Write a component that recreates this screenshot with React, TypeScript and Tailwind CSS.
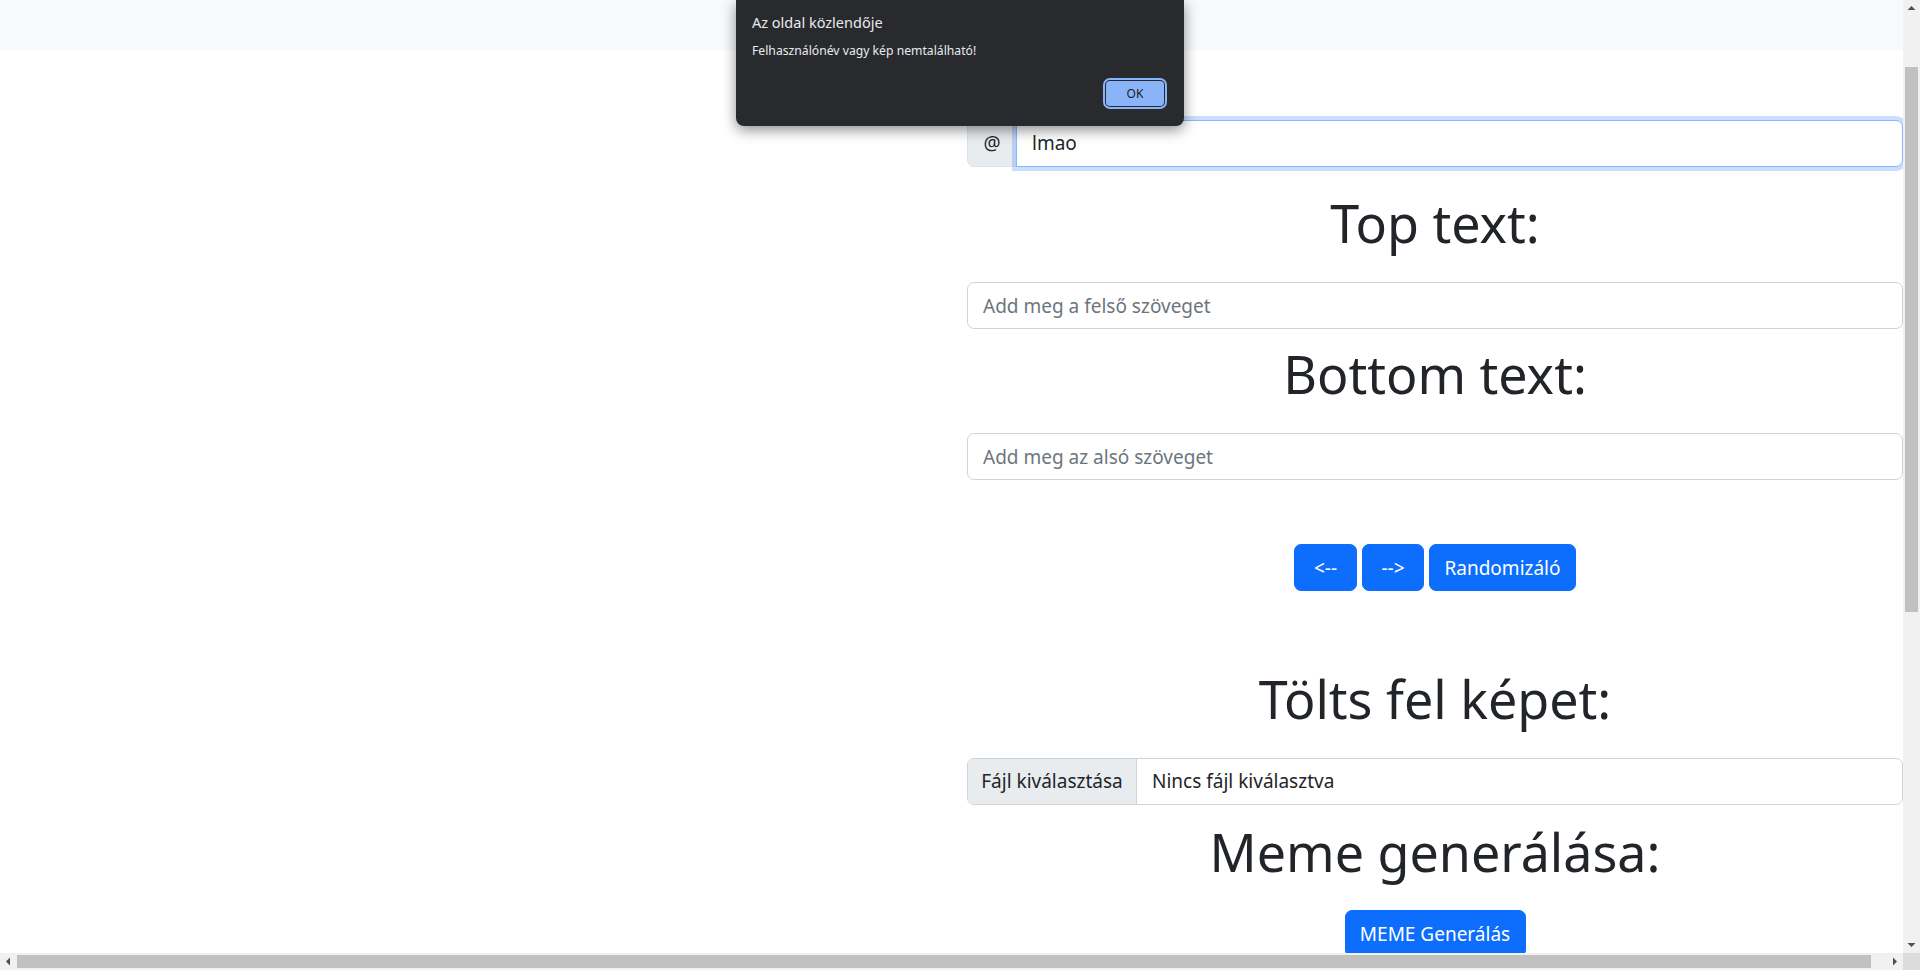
import React from 'react';

const font = { fontFamily: '"Noto Sans", "Open Sans", Arial, sans-serif' };

function Heading({ children, className = '' }: { children: React.ReactNode; className?: string }) {
  return (
    <h1 className={`text-[52px] leading-[60px] font-normal text-[#212529] text-center ${className}`}>{children}</h1>
  );
}

function TextInput({ placeholder, className = '' }: { placeholder: string; className?: string }) {
  return (
    <input
      type="text"
      placeholder={placeholder}
      className={`block w-full h-[47px] px-[15px] text-[19px] text-[#212529] bg-white border border-[#ced4da] rounded-[7px] outline-none placeholder:text-[#6c757d] ${className}`}
    />
  );
}

function BlueButton({ children, width }: { children: React.ReactNode; width: string }) {
  return (
    <button
      className={`${width} h-[47px] rounded-[7px] bg-[#0d6efd] border border-[#0d6efd] text-white text-[19px] leading-[30px]`}
    >
      {children}
    </button>
  );
}

function Arrow({ dir }: { dir: 'up' | 'down' | 'left' | 'right' }) {
  const points = {
    up: '4.5,10 8.5,6 12.5,10',
    down: '4.5,7 8.5,11 12.5,7',
    left: '10,4.5 6,8.5 10,12.5',
    right: '7,4.5 11,8.5 7,12.5',
  }[dir];
  return (
    <div className="w-[17px] h-[17px] flex-none">
      <svg width="17" height="17" viewBox="0 0 17 17">
        <polygon points={points} fill="#505050" />
      </svg>
    </div>
  );
}

function AlertBox() {
  return (
    <div className="absolute top-0 left-[736px] w-[448px] h-[126px] bg-[#292a2d] rounded-b-[8px] shadow-[0_4px_14px_rgba(0,0,0,0.45)] px-[16px] pt-[12px] flex flex-col">
      <div className="text-[14.5px] leading-[20px] text-[#e8eaed]">Az oldal közlendője</div>
      <div className="mt-[10px] text-[12.2px] leading-[18px] text-[#e8eaed]">Felhasználónév vagy kép nemtalálható!</div>
      <div className="flex justify-end mt-[21px] pr-[4px]">
        <button className="w-[58px] h-[25px] rounded-[4px] bg-[#8ab4f8] text-[#202124] text-[12px] ring-2 ring-[#8ab4f8] ring-offset-1 ring-offset-[#292a2d]">
          OK
        </button>
      </div>
    </div>
  );
}

export default function App() {
  return (
    <div className="relative w-[1920px] h-[970px] overflow-hidden bg-white flex flex-col" style={font}>
      <div className="flex h-[953px]">
        {/* page */}
        <div className="flex-1 overflow-hidden">
          <nav className="h-[50px] bg-[#f8f9fa]" />
          <div className="flex">
            <div className="w-[967px] flex-none" />
            <div className="w-[936px] flex-none flex flex-col">
              <div className="mt-[70px] flex h-[47px]">
                <span className="w-[50px] flex-none flex items-center justify-center bg-[#e9ecef] border border-[#dee2e6] rounded-l-[7px] text-[19px] text-[#212529]">
                  @
                </span>
                <input
                  type="text"
                  defaultValue="lmao"
                  className="relative flex-1 min-w-0 -ml-px px-[15px] text-[19px] text-[#212529] bg-white border border-[#86b7fe] rounded-r-[7px] outline-none shadow-[0_0_0_4px_rgba(13,110,253,0.22)]"
                />
              </div>

              <Heading className="mt-[26px]">Top text:</Heading>
              <TextInput className="mt-[29px]" placeholder="Add meg a felső szöveget" />

              <Heading className="mt-[15px]">Bottom text:</Heading>
              <TextInput className="mt-[29px]" placeholder="Add meg az alsó szöveget" />

              <div className="mt-[64px] flex justify-center gap-[5px]">
                <BlueButton width="w-[63px]">&lt;--</BlueButton>
                <BlueButton width="w-[62px]">--&gt;</BlueButton>
                <BlueButton width="w-[147px]">Randomizáló</BlueButton>
              </div>

              <Heading className="mt-[78px]">Tölts fel képet:</Heading>
              <div className="mt-[29px] flex h-[47px] border border-[#ced4da] rounded-[7px] overflow-hidden text-[19px] text-[#212529]">
                <span className="w-[169px] flex-none flex items-center justify-center bg-[#e9ecef] border-r border-[#ced4da]">
                  Fájl kiválasztása
                </span>
                <span className="flex items-center pl-[15px]">Nincs fájl kiválasztva</span>
              </div>

              <Heading className="mt-[17px]">Meme generálása:</Heading>
              <div className="mt-[28px] flex justify-center">
                <BlueButton width="w-[181px]">MEME Generálás</BlueButton>
              </div>
            </div>
          </div>
        </div>

        {/* vertical scrollbar */}
        <div className="w-[17px] flex-none bg-[#f1f1f1] flex flex-col">
          <Arrow dir="up" />
          <div className="flex-1 flex flex-col">
            <div className="h-[50px]" />
            <div className="h-[545px] mx-[2px] bg-[#c1c1c1]" />
          </div>
          <Arrow dir="down" />
        </div>
      </div>

      {/* horizontal scrollbar */}
      <div className="flex h-[17px]">
        <div className="flex-1 flex bg-[#f1f1f1]">
          <Arrow dir="left" />
          <div className="flex-1 flex">
            <div className="w-[1854px] my-[2px] bg-[#c1c1c1]" />
          </div>
          <Arrow dir="right" />
        </div>
        <div className="w-[17px] bg-[#dcdcdc]" />
      </div>

      <AlertBox />
    </div>
  );
}
